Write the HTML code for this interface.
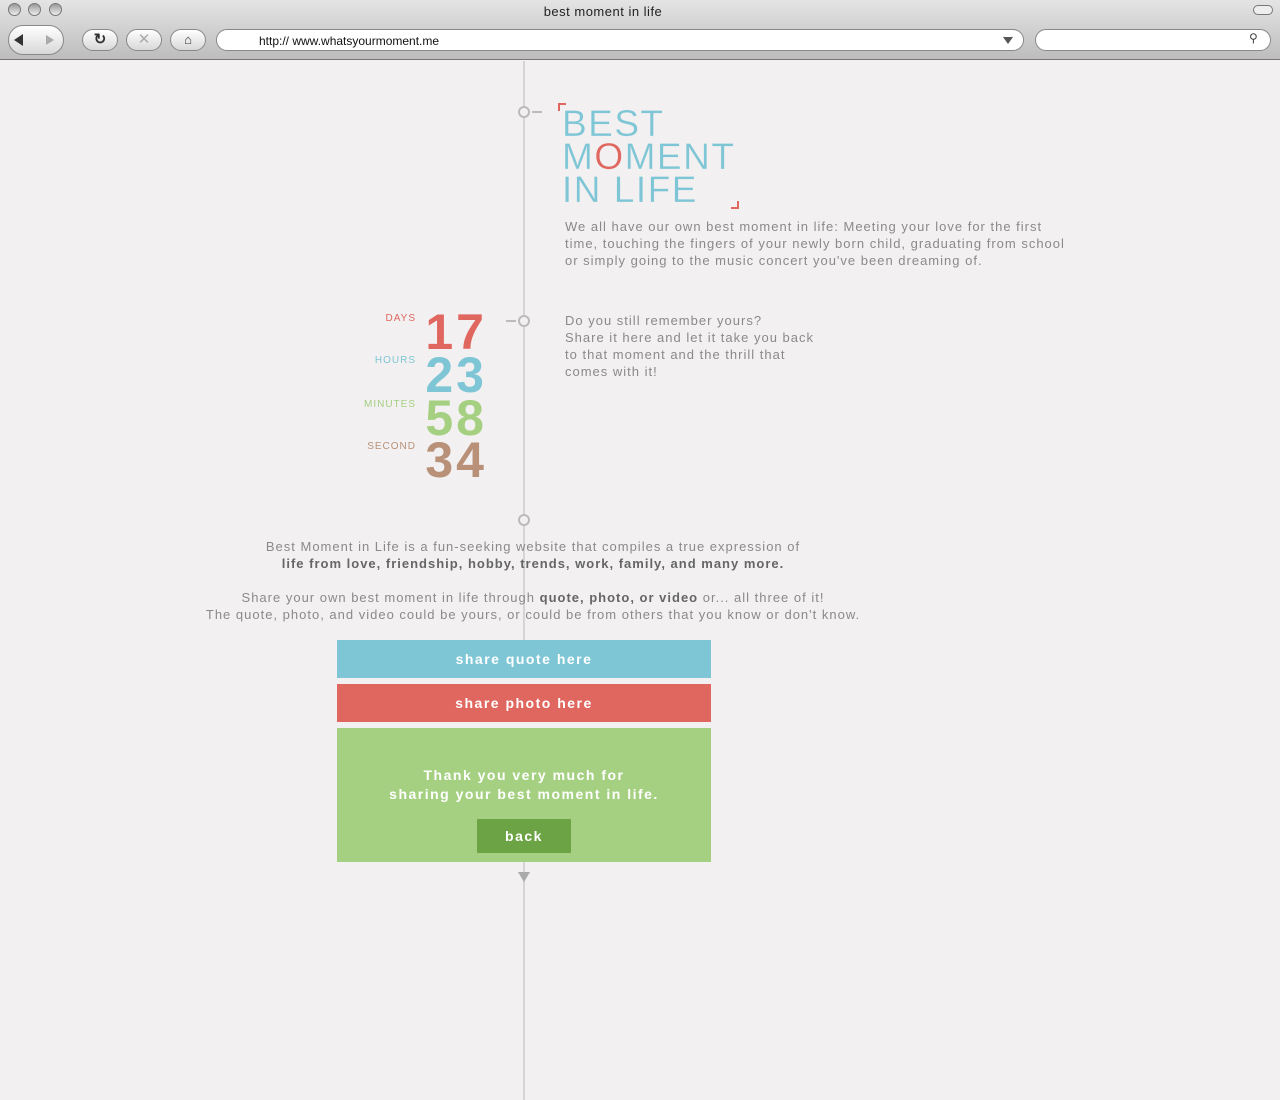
<!DOCTYPE html>
<html><head><meta charset="utf-8"><style>
*{margin:0;padding:0;box-sizing:border-box}
body{width:1280px;height:1100px;background:#f2f0f0;font-family:"Liberation Sans",sans-serif;position:relative;overflow:hidden;color:#8a8a8a}
.a{position:absolute}
.bar{left:0;top:0;width:1280px;height:60px;background:linear-gradient(#e4e4e4,#bdbdbd);border-bottom:1px solid #777}
.btn{border:1px solid #888;border-radius:12px;background:linear-gradient(#fff,#d8d8d8);height:22px;top:29px}
.lt{font-size:13px;letter-spacing:1px;line-height:17px}
.tl{color:#7ec6d6;font-size:37px;line-height:33px;letter-spacing:1.5px;font-weight:normal;-webkit-text-stroke:0.3px #f2f0f0}
.lab{font-size:10px;letter-spacing:1px;text-align:right;width:60px}
.num{font-size:50px;font-weight:bold;text-align:right;width:90px;line-height:44px;letter-spacing:3px}
.b{color:#fff;font-weight:bold;font-size:14px;letter-spacing:1.5px;text-align:center}
.c{width:12px;height:12px;border:2px solid #bbb;border-radius:50%;background:#f2f0f0}
</style></head><body>
<div class="a bar"></div>
<div class="a" style="left:8px;top:3px;width:13px;height:13px;border-radius:50%;background:linear-gradient(#999,#eee);border:1px solid #777"></div>
<div class="a" style="left:28px;top:3px;width:13px;height:13px;border-radius:50%;background:linear-gradient(#999,#eee);border:1px solid #777"></div>
<div class="a" style="left:49px;top:3px;width:13px;height:13px;border-radius:50%;background:linear-gradient(#999,#eee);border:1px solid #777"></div>
<div class="a" style="left:0;top:4px;width:1206px;text-align:center;font-size:13px;color:#222;letter-spacing:.5px">best moment in life</div>
<div class="a" style="left:1253px;top:5px;width:20px;height:10px;border:1px solid #777;border-radius:5px;background:#eee"></div>
<div class="a btn" style="left:8px;width:56px;top:25px;height:30px;border-radius:15px"></div>
<div class="a" style="left:14px;top:34px;width:0;height:0;border:6px solid transparent;border-right:9px solid #333;border-left:0"></div>
<div class="a" style="left:46px;top:35px;border:5px solid transparent;border-left:8px solid #aaa;border-right:0"></div>
<div class="a btn" style="left:82px;width:36px;font-size:15px;text-align:center;color:#333;line-height:20px;font-weight:bold">↻</div>
<div class="a btn" style="left:126px;width:36px;font-size:15px;text-align:center;color:#aaa;line-height:20px">✕</div>
<div class="a btn" style="left:170px;width:36px;font-size:13px;text-align:center;color:#333;line-height:20px">⌂</div>
<div class="a btn" style="left:216px;width:808px;background:#fff"></div>
<div class="a" style="left:259px;top:34px;font-size:12px;color:#111">http:// www.whatsyourmoment.me</div>
<div class="a" style="left:1003px;top:37px;border:5px solid transparent;border-top:7px solid #555;border-bottom:0"></div>
<div class="a btn" style="left:1035px;width:236px;background:#fff"></div>
<div class="a" style="left:1249px;top:31px;font-size:12px;color:#444">⚲</div>

<div class="a" style="left:523px;top:61px;width:2px;height:579px;background:#d6d4d4"></div>
<div class="a" style="left:523px;top:862px;width:2px;height:238px;background:#d6d4d4"></div>
<div class="a c" style="left:518px;top:106px"></div><div class="a" style="left:532px;top:111px;width:10px;height:2px;background:#bbb"></div>
<div class="a c" style="left:518px;top:315px"></div><div class="a" style="left:506px;top:320px;width:10px;height:2px;background:#bbb"></div>
<div class="a c" style="left:518px;top:514px"></div>
<div class="a" style="left:518px;top:872px;border:6px solid transparent;border-top:10px solid #aaa;border-bottom:0"></div>

<div class="a" style="left:558px;top:103px;width:8px;height:8px;border-left:2px solid #e0675f;border-top:2px solid #e0675f"></div>
<div class="a" style="left:731px;top:201px;width:8px;height:8px;border-right:2px solid #e0675f;border-bottom:2px solid #e0675f"></div>
<div class="a tl" style="left:562px;top:107px">BEST<br>M<span style="color:#e0675f">O</span>MENT<br>IN LIFE</div>
<div class="a lt" style="left:565px;top:218px;width:505px">We all have our own best moment in life: Meeting your love for the first time, touching the fingers of your newly born child, graduating from school or simply going to the music concert you've been dreaming of.</div>
<div class="a lt" style="left:565px;top:312px;width:280px">Do you still remember yours?<br>Share it here and let it take you back<br>to that moment and the thrill that<br>comes with it!</div>

<div class="a lab" style="left:356px;top:313px;color:#e0675f">DAYS</div>
<div class="a num" style="left:397px;top:310px;color:#e0675f">17</div>
<div class="a lab" style="left:356px;top:355px;color:#7ec6d6">HOURS</div>
<div class="a num" style="left:397px;top:353px;color:#7ec6d6">23</div>
<div class="a lab" style="left:356px;top:399px;color:#a5d082">MINUTES</div>
<div class="a num" style="left:397px;top:396px;color:#a5d082">58</div>
<div class="a lab" style="left:356px;top:441px;color:#b89178">SECOND</div>
<div class="a num" style="left:397px;top:438px;color:#b89178">34</div>

<div class="a lt" style="left:0;top:538px;width:1066px;text-align:center">Best Moment in Life is a fun-seeking website that compiles a true expression of<br><b style="color:#666">life from love, friendship, hobby, trends, work, family, and many more.</b></div>
<div class="a lt" style="left:0;top:589px;width:1066px;text-align:center">Share your own best moment in life through <b style="color:#666">quote, photo, or video</b> or... all three of it!<br>The quote, photo, and video could be yours, or could be from others that you know or don't know.</div>

<div class="a b" style="left:337px;top:640px;width:374px;height:38px;line-height:38px;background:#7ec6d6">share quote here</div>
<div class="a b" style="left:337px;top:684px;width:374px;height:38px;line-height:38px;background:#e0675f">share photo here</div>
<div class="a b" style="left:337px;top:728px;width:374px;height:134px;background:#a5d082;padding-top:38px;line-height:19px">Thank you very much for<br>sharing your best moment in life.</div>
<div class="a b" style="left:477px;top:819px;width:94px;height:34px;line-height:34px;background:#6ba345">back</div>
</body></html>
